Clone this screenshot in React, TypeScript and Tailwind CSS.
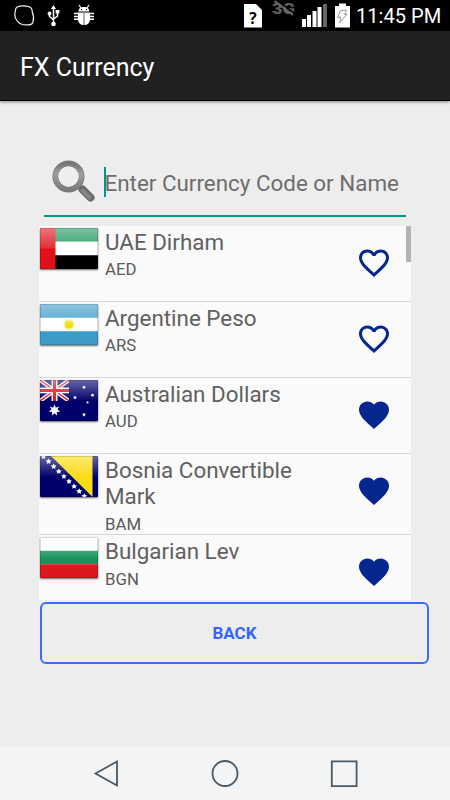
import type { ReactNode } from "react";
import { clsx } from "clsx";

const HEART =
  "M12 21.35l-1.45-1.32C5.4 15.36 2 12.28 2 8.5 2 5.42 4.42 3 7.5 3c1.74 0 3.41.81 4.5 2.09C13.09 3.81 14.76 3 16.5 3 19.58 3 22 5.42 22 8.5c0 3.78-3.4 6.86-8.55 11.54L12 21.35z";
const HEART_OUTLINE =
  "M16.5 3c-1.74 0-3.41.81-4.5 2.09C10.91 3.81 9.24 3 7.5 3 4.42 3 2 5.42 2 8.5c0 3.78 3.4 6.86 8.55 11.54L12 21.35l1.45-1.32C18.6 15.36 22 12.28 22 8.5 22 5.42 19.58 3 16.5 3zm-4.4 15.55l-.1.1-.1-.1C7.14 14.24 4 11.39 4 8.5 4 6.5 5.5 5 7.5 5c1.54 0 3.04.99 3.57 2.36h1.87C13.46 5.99 14.96 5 16.5 5c2 0 3.5 1.5 3.5 3.5 0 2.89-3.14 5.74-7.9 10.05z";

function starPoints(cx: number, cy: number, r: number, n: number, inner: number) {
  const pts: string[] = [];
  for (let i = 0; i < n * 2; i++) {
    const a = (Math.PI * i) / n - Math.PI / 2;
    const d = i % 2 ? r * inner : r;
    pts.push(`${(cx + d * Math.cos(a)).toFixed(2)},${(cy + d * Math.sin(a)).toFixed(2)}`);
  }
  return pts.join(" ");
}

function Star({ x, y, r, n = 5, inner = 0.5 }: { x: number; y: number; r: number; n?: number; inner?: number }) {
  return <polygon points={starPoints(x, y, r, n, inner)} fill="#fff" />;
}

const flags: Record<string, ReactNode> = {
  AED: (
    <>
      <path d="M0 0h58v14H0z" fill="#21965a" />
      <path d="M0 14h58v14H0z" fill="#fff" />
      <path d="M0 28h58v14H0z" fill="#000" />
      <path d="M0 0h15.5v42H0z" fill="#e0111b" />
    </>
  ),
  ARS: (
    <>
      <path d="M0 0h58v42H0z" fill="#3d9bc8" />
      <path d="M0 14h58v14H0z" fill="#fff" />
      <circle cx="29" cy="21" r="5.6" fill="#f3ea62" opacity=".6" />
      <circle cx="29" cy="21" r="4.2" fill="#eedd12" />
    </>
  ),
  AUD: (
    <>
      <path d="M0 0h58v42H0z" fill="#00006b" />
      <svg width="29" height="21.5" viewBox="0 0 29 21.5">
        <path d="M0 0L29 21.5M29 0L0 21.5" stroke="#fff" strokeWidth="4" />
        <path d="M0 0L29 21.5M29 0L0 21.5" stroke="#d8232f" strokeWidth="1.5" />
        <path d="M14.5 0v21.5M0 10.7h29" stroke="#fff" strokeWidth="6" />
        <path d="M14.5 0v21.5M0 10.7h29" stroke="#d8101f" strokeWidth="3.2" />
      </svg>
      <Star x={14.5} y={31} r={6} n={7} />
      <Star x={44} y={7.5} r={2} n={7} />
      <Star x={35} y={18} r={2} n={7} />
      <Star x={52.5} y={15.5} r={2} n={7} />
      <Star x={47.5} y={23} r={1.5} />
      <Star x={44} y={35.5} r={2} n={7} />
    </>
  ),
  BAM: (
    <>
      <path d="M0 0h58v42H0z" fill="#00006b" />
      <path d="M11 0h41.5v42z" fill="#fadb14" />
      {[0, 1, 2, 3, 4, 5, 6, 7, 8].map((i) => (
        <Star key={i} x={3.5 + i * 5.1} y={0.5 + i * 5.1} r={3.1} />
      ))}
    </>
  ),
  BGN: (
    <>
      <path d="M0 0h58v14H0z" fill="#fff" />
      <path d="M0 14h58v14H0z" fill="#17935a" />
      <path d="M0 28h58v14H0z" fill="#dc181f" />
    </>
  ),
};

const currencies = [
  { code: "AED", name: "UAE Dirham", favorite: false, height: "h-[76px]", gloss: [0.42, 0.12] },
  { code: "ARS", name: "Argentine Peso", favorite: false, height: "h-[76px]", gloss: [0.42, 0.12] },
  { code: "AUD", name: "Australian Dollars", favorite: true, height: "h-[76px]", gloss: [0.4, 0.02] },
  { code: "BAM", name: "Bosnia Convertible Mark", favorite: true, height: "h-[81.4px]", gloss: [0.4, 0.02] },
  { code: "BGN", name: "Bulgarian Lev", favorite: true, height: "h-[76px]", gloss: [0.42, 0.06] },
];

function Flag({ code, gloss }: { code: string; gloss: number[] }) {
  return (
    <svg
      width="58"
      height="41"
      viewBox="0 0 58 42"
      preserveAspectRatio="none"
      className="mt-[1.5px] shrink-0 overflow-hidden rounded-[1px] shadow-[0_1px_2px_rgba(0,0,0,0.6)]"
    >
      <defs>
        <linearGradient id={`gloss-${code}`} x1="0" y1="0" x2="0" y2="1">
          <stop offset="0" stopColor="#fff" stopOpacity={gloss[0]} />
          <stop offset="1" stopColor="#fff" stopOpacity={gloss[1]} />
        </linearGradient>
      </defs>
      {flags[code]}
      <path d="M0 0h58v21H0z" fill={`url(#gloss-${code})`} />
      <path d="M.5 .5h57v41H.5z" fill="none" stroke="#000" strokeOpacity=".15" />
    </svg>
  );
}

function StatusBar() {
  return (
    <div className="flex h-[31px] shrink-0 items-start bg-black text-white">
      <svg width="110" height="31" fill="none">
        {/* message */}
        <path
          d="M17 7c4-1.5 9-1.3 12-.3 2.5.8 3.3 2.500 3.200 5 1.500 3.500 1.800 7 .8 10.500-.9 2.500-3 3-6 2.700-4 .4-7-.8-9.500-3.500-2.700-3-3-7-2.200-10.500.2-1.800.5-3.200 1.700-3.900z"
          stroke="#f0f0f0"
          strokeWidth="1.2"
        />
        {/* usb */}
        <path d="M53.5 8v16M49.5 13v3.5l4 3.5M57.5 12v4l-4 3" stroke="#fff" strokeWidth="1.5" />
        <path d="M53.5 5l2.6 4h-5.2zM55.6 10h3.8v3.6h-3.8z" fill="#fff" />
        <circle cx="49.5" cy="13.5" r="1.9" fill="#fff" />
        <circle cx="53.5" cy="24" r="2.3" fill="#fff" />
        {/* debug bug */}
        <path d="M78.5 11.5c0-3.2 2.2-4.5 5.4-4.5s5.4 1.3 5.4 4.5z" fill="#fff" />
        <path d="M79 5l2 3M89 5l-2 3" stroke="#fff" strokeWidth="1.2" />
        <path d="M78 12.5h12v6.5c0 4-2.7 6-6 6s-6-2-6-6z" fill="#fff" />
        <path d="M84 13v12" stroke="#999" strokeWidth="1.5" />
        <path d="M78 13.5h-4M78 16.5h-4M78 19.3h-4M90 13.5h4M90 16.5h4M90 19.3h4" stroke="#fff" strokeWidth="1.4" />
        <circle cx="81.5" cy="9.5" r=".7" fill="#000" />
        <circle cx="86.5" cy="9.5" r=".7" fill="#000" />
      </svg>
      <div className="ml-auto flex items-start">
        <svg width="18" height="31" viewBox="0 0 18 31">
          <path d="M0 4h12l6 6v17.5H0z" fill="#fff" />
          <text x="9" y="23.5" textAnchor="middle" fontSize="15.5" fontWeight="700" fontFamily="Open Sans, sans-serif" fill="#000">?</text>
        </svg>
        <svg width="26" height="31" viewBox="0 0 26 31" className="ml-2" fill="none">
          <text x="2" y="14" fontSize="15" fontWeight="900" textLength="23" lengthAdjust="spacingAndGlyphs" fontFamily="Roboto, sans-serif" fill="#606060">3G</text>
          <path d="M6.5 0l19 14" stroke="#000" strokeWidth="1.5" />
          <path d="M4.5 1l18.5 14" stroke="#686868" strokeWidth="2" />
        </svg>
        <svg width="26" height="31" viewBox="0 0 26 31" className="ml-1.5">
          <path d="M0 19h4v8H0zM5 15h4v12H5zM10.5 11h4v16h-4zM15.5 7h4v20h-4z" fill="#fff" />
          <path d="M21 4h4v23h-4z" fill="#666" />
        </svg>
        <svg width="15" height="31" viewBox="0 0 15 31" className="ml-[7px]">
          <path d="M4 3.5h7V6h4v21.5H0V6h4z" fill="#fff" />
          <path d="M5.5 10.5l6-.5-2 4.5 2.5-.5-7 8.5.5-5.5-3 .5z" fill="none" stroke="#999" />
        </svg>
        <span className="ml-[6px] mr-2 w-[86px] whitespace-nowrap pt-px text-[20.1px] leading-[31px]">11:45 PM</span>
      </div>
    </div>
  );
}

function SearchIcon() {
  return (
    <svg width="46" height="46" viewBox="0 0 46 46" fill="none" className="shrink-0">
      <defs>
        <linearGradient id="metal" x1="0" y1="0" x2="0" y2="1">
          <stop offset="0" stopColor="#767676" />
          <stop offset=".4" stopColor="#a0a0a0" />
          <stop offset="1" stopColor="#7a7a7a" />
        </linearGradient>
      </defs>
      <path d="M27 26l5 5" stroke="#a8a8a8" strokeWidth="4" />
      <path d="M31.5 30.5l8 8" stroke="#686868" strokeWidth="8" strokeLinecap="round" />
      <path d="M31.5 31.5l7 7" stroke="#858585" strokeWidth="4" strokeLinecap="round" />
      <circle cx="17.5" cy="17.5" r="13" stroke="#757575" strokeWidth="6" />
      <circle cx="17.5" cy="17.5" r="13" stroke="url(#metal)" strokeWidth="4.5" />
      <circle cx="17.5" cy="17.5" r="10.3" fill="#eeeeee" />
    </svg>
  );
}

export default function App() {
  return (
    <div className="flex h-[800px] w-[450px] flex-col overflow-hidden bg-[#ededed] font-[Roboto,sans-serif]">
      <StatusBar />
      <header className="z-10 flex h-[70px] shrink-0 items-center border-b border-black bg-[#212121] pl-5 pt-[5px] shadow-[0_1px_3px_rgba(0,0,0,0.45)]">
        <h1 className="text-[25px] text-white">FX Currency</h1>
      </header>

      <main className="flex flex-1 flex-col pl-[39px] pt-[50px]">
        {/* Search field */}
        <div className="ml-[5px] flex h-[66px] w-[362px] items-start border-b-2 border-[#009688] pl-[7px] pt-[8px]">
          <SearchIcon />
          <div className="ml-[7px] mt-2 h-[30px] w-0.5 shrink-0 bg-[#009688]" />
          <span className="-ml-[1.5px] mt-2 whitespace-nowrap text-[22.4px] leading-[32px] text-[#6d6d6d]">Enter Currency Code or Name</span>
        </div>

        {/* Currency list */}
        <div className="relative mt-[9px] h-[374px] w-[372px] shrink-0 overflow-hidden bg-[#fafafa]">
          {currencies.map((c) => (
            <div key={c.code} className={clsx("flex items-start border-b border-[#d6d6d6] pl-px", c.height)}>
              <Flag code={c.code} gloss={c.gloss} />
              <div className="ml-[7px] w-[210px] pt-[3px]">
                <div className="text-[22.4px] leading-[26.4px] text-[#606060]">{c.name}</div>
                <div className="text-[16.8px] leading-[28.4px] text-[#5a5a5a]">{c.code}</div>
              </div>
              <svg width="36" height="36" viewBox="0 0 24 24" className="ml-[41px] mt-[19px]" fill="#05268c">
                <path d={c.favorite ? HEART : HEART_OUTLINE} />
              </svg>
            </div>
          ))}
          <div className="absolute right-0 top-0 h-9 w-[5px] bg-[#b3b3b3]" />
        </div>

        <button className="ml-px mt-[1.5px] h-[62px] w-[389px] shrink-0 rounded-[6px] border-2 border-[#3a6cff] pt-0.5 text-[17px] font-bold text-[#3366ff]">
          BACK
        </button>
      </main>

      <nav className="h-[53px] shrink-0 bg-[#f4f4f4]">
        <svg width="450" height="53" fill="none" stroke="#485a66" strokeWidth="1.8">
          <path d="M95.5 26.5L117 14.5v24z" />
          <circle cx="225" cy="26.5" r="12.5" />
          <path d="M331.8 14.3h24.8v24.8h-24.8z" />
        </svg>
      </nav>
    </div>
  );
}
